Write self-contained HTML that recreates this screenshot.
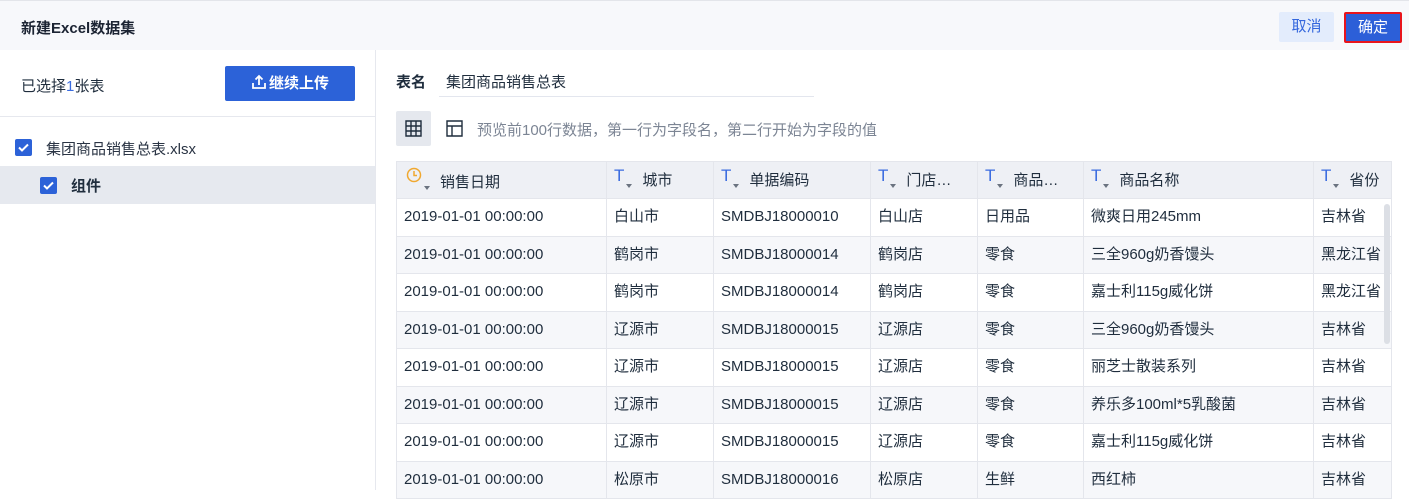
<!DOCTYPE html>
<html><head><meta charset="utf-8"><style>
*{margin:0;padding:0;box-sizing:border-box}
body{width:1409px;height:490px;overflow:hidden;background:#fff;font-family:"Liberation Sans","Noto Sans CJK SC",sans-serif;color:#1f2d3d;font-size:15px;position:relative}
.hdr{position:absolute;left:0;top:0;width:1409px;height:50px;background:#f7f8fb;border-top:1px solid #e3e5ea}
.title{position:absolute;left:21px;top:16px;font-weight:bold;font-size:15px;color:#1c2433}
.btn{position:absolute;font-size:15px;text-align:center;line-height:30px;border-radius:2px}
.left{position:absolute;left:0;top:50px;width:376px;height:440px;border-right:1px solid #e6e8ee}
.cb{position:absolute;width:17px;height:17px;background:#2c62d8;border-radius:2px}
.cb svg{position:absolute;left:2px;top:2px}
table{position:absolute;left:396px;top:161px;border-collapse:collapse;table-layout:fixed;width:995px}
td,th{border:1px solid #e4e6ec;height:37.5px;padding:0 7px;font-weight:normal;text-align:left;white-space:nowrap;overflow:hidden;font-size:15px;color:#1f2d3d;line-height:20px}
td span{display:inline-block;vertical-align:middle}
th{background:#eef0f5;height:37px}
tr.g td{background:#f6f7fa}
.T{color:#3b6be0;font-size:17px;font-family:"Liberation Sans",sans-serif;position:relative;top:-4px;margin-right:2px}
.ar{display:inline-block;width:0;height:0;border-left:3.5px solid transparent;border-right:3.5px solid transparent;border-top:4px solid #6b7380;margin-right:10px;position:relative;top:3px}
</style></head><body>
<div class="hdr"><div class="title">新建Excel数据集</div>
<div class="btn" style="left:1279px;top:11px;width:55px;background:#e3ecfc;color:#3366dd">取消</div>
<div class="btn" style="left:1344px;top:11px;width:58px;height:31px;background:#2c5fd8;color:#fff;border:2px solid #e8141c;line-height:27px">确定</div>
</div>
<div class="left">
<div style="position:absolute;left:21px;top:25px">已选择<span style="color:#3a6ce0">1</span>张表</div>
<div style="position:absolute;left:225px;top:16px;width:130px;height:35px;background:#2c62d8;border-radius:2px;color:#fff;font-size:15px;font-weight:bold;line-height:35px;text-align:center">
<svg width="16" height="16" viewBox="0 0 16 16" style="vertical-align:-2px;margin-right:2px"><path d="M8 11V2M4.5 5.5L8 2l3.5 3.5M2 9v5h12V9" stroke="#fff" stroke-width="1.8" fill="none"/></svg>继续上传</div>
<div style="position:absolute;left:0;top:66px;width:375px;border-top:1px solid #e6e8ee"></div>
<div class="cb" style="left:15px;top:89px"><svg width="13" height="13"><path d="M2 6.5l3 3 6-6" stroke="#fff" stroke-width="2" fill="none"/></svg></div>
<div style="position:absolute;left:46px;top:88px;color:#2a3444">集团商品销售总表.xlsx</div>
<div style="position:absolute;left:0;top:116px;width:375px;height:38px;background:#e6e9ef"></div>
<div class="cb" style="left:40px;top:127px"><svg width="13" height="13"><path d="M2 6.5l3 3 6-6" stroke="#fff" stroke-width="2" fill="none"/></svg></div>
<div style="position:absolute;left:71px;top:125px;font-weight:bold">组件</div>
</div>
<div style="position:absolute;left:396px;top:71px;font-weight:bold">表名</div>
<div style="position:absolute;left:446px;top:71px">集团商品销售总表</div>
<div style="position:absolute;left:439px;top:96px;width:375px;border-top:1px solid #e3e6ee"></div>
<div style="position:absolute;left:396px;top:111px;width:35px;height:35px;background:#e5e8ee;border-radius:2px">
<svg width="17" height="17" viewBox="0 0 17 17" style="position:absolute;left:9px;top:9px"><path d="M1 1h15v15H1zM1 6h15M1 11h15M6 1v15M11 1v15" stroke="#1f2d3d" stroke-width="1.4" fill="none"/></svg></div>
<svg width="17" height="17" viewBox="0 0 17 17" style="position:absolute;left:446px;top:120px"><path d="M1 1h15v15H1zM1 6h15M6 6v10" stroke="#1f2d3d" stroke-width="1.4" fill="none"/></svg>
<div style="position:absolute;left:477px;top:119px;color:#7c8594">预览前100行数据，第一行为字段名，第二行开始为字段的值</div>
<table>
<colgroup><col style="width:210px"><col style="width:107px"><col style="width:157px"><col style="width:107px"><col style="width:106px"><col style="width:230px"><col style="width:78px"></colgroup>
<tr><th><svg width="16" height="16" viewBox="0 0 16 16" style="vertical-align:4px;margin-left:2px"><circle cx="8" cy="8" r="6.5" stroke="#f0a830" stroke-width="1.5" fill="none"/><path d="M8 4v4.5h3" stroke="#f0a830" stroke-width="1.5" fill="none"/></svg><span class="ar" style="margin-left:2px"></span>销售日期</th>
<th><span class="T">T</span><span class="ar"></span>城市</th>
<th><span class="T">T</span><span class="ar"></span>单据编码</th>
<th><span class="T">T</span><span class="ar"></span>门店…</th>
<th><span class="T">T</span><span class="ar"></span>商品…</th>
<th><span class="T">T</span><span class="ar"></span>商品名称</th>
<th><span class="T">T</span><span class="ar"></span>省份</th></tr>
<tr><td>2019-01-01 00:00:00</td><td>白山市</td><td>SMDBJ18000010</td><td>白山店</td><td>日用品</td><td>微爽日用245mm</td><td>吉林省</td></tr>
<tr class="g"><td>2019-01-01 00:00:00</td><td>鹤岗市</td><td>SMDBJ18000014</td><td>鹤岗店</td><td>零食</td><td>三全960g奶香馒头</td><td>黑龙江省</td></tr>
<tr><td>2019-01-01 00:00:00</td><td>鹤岗市</td><td>SMDBJ18000014</td><td>鹤岗店</td><td>零食</td><td>嘉士利115g威化饼</td><td>黑龙江省</td></tr>
<tr class="g"><td>2019-01-01 00:00:00</td><td>辽源市</td><td>SMDBJ18000015</td><td>辽源店</td><td>零食</td><td>三全960g奶香馒头</td><td>吉林省</td></tr>
<tr><td>2019-01-01 00:00:00</td><td>辽源市</td><td>SMDBJ18000015</td><td>辽源店</td><td>零食</td><td>丽芝士散装系列</td><td>吉林省</td></tr>
<tr class="g"><td>2019-01-01 00:00:00</td><td>辽源市</td><td>SMDBJ18000015</td><td>辽源店</td><td>零食</td><td>养乐多100ml*5乳酸菌</td><td>吉林省</td></tr>
<tr><td>2019-01-01 00:00:00</td><td>辽源市</td><td>SMDBJ18000015</td><td>辽源店</td><td>零食</td><td>嘉士利115g威化饼</td><td>吉林省</td></tr>
<tr class="g"><td>2019-01-01 00:00:00</td><td>松原市</td><td>SMDBJ18000016</td><td>松原店</td><td>生鲜</td><td>西红柿</td><td>吉林省</td></tr>
</table>
<div style="position:absolute;left:1384px;top:204px;width:6px;height:140px;background:#dcdfe5;border-radius:3px"></div>
</body></html>
